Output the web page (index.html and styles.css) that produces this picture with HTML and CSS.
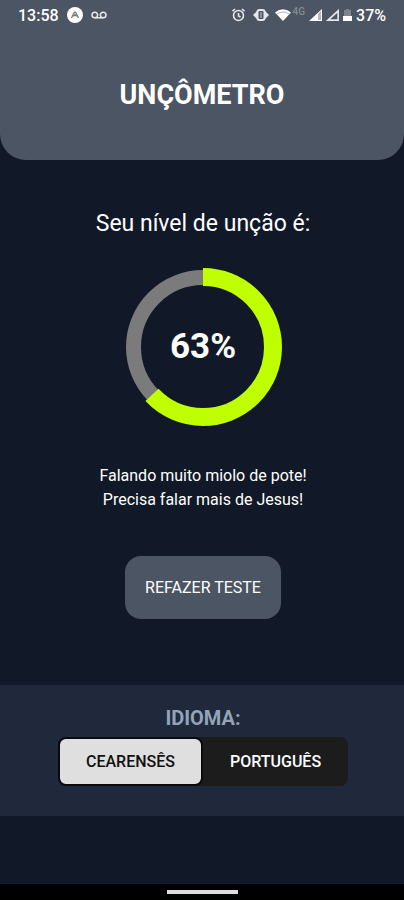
FILE: index.html
```
<!DOCTYPE html>
<html lang="pt-BR">
<head>
<meta charset="utf-8">
<meta name="viewport" content="width=device-width, initial-scale=1">
<title>Unçômetro</title>
<link rel="stylesheet" href="styles.css">
</head>
<body>
<header class="header">
  <div class="status">
    <div class="status-left">
      <span class="clock">13:58</span>
      <svg width="16" height="16" viewBox="0 0 16 16" aria-hidden="true">
        <circle cx="8" cy="8" r="8" fill="#fff"/>
        <path d="M4.5 11 7 5.8Q8 4.4 9 5.8L11.500 11M6.500 9.500 8 7.500 9.500 9.500" fill="none" stroke="#6b7480" stroke-width="1.200"/>
      </svg>
      <svg width="16" height="8" viewBox="0 0 16 8" fill="none" stroke="#e5e7eb" stroke-width="1.500" aria-hidden="true">
        <circle cx="3.800" cy="4" r="2.800"/><circle cx="12.200" cy="4" r="2.800"/><path d="M3.800 6.800h8.400"/>
      </svg>
    </div>
    <div class="status-right">
      <svg class="alarm" width="13" height="14" viewBox="0 0 13 14" fill="none" stroke="#e5e7eb" stroke-width="1.600" aria-hidden="true">
        <circle cx="6.500" cy="7.500" r="5"/><path d="M.500 3.200 3 1M12.500 3.200 10 1M6.500 5v3l2 1"/>
      </svg>
      <svg class="vibrate" width="16" height="12" viewBox="0 0 16 12" aria-hidden="true">
        <path d="M0 6 4 2v8zM16 6l-4-4v8z" fill="#e5e7eb"/><rect x="4.500" y="1" width="7" height="10" rx="2" fill="none" stroke="#e5e7eb" stroke-width="2"/><path d="M8 3v6" stroke="#9ca3af" stroke-width="1.500"/>
      </svg>
      <svg class="wifi" width="16" height="12" viewBox="0 0 16 12" aria-hidden="true">
        <path d="M0 3.500Q8-3 16 3.500L8 12z" fill="#fff"/><path d="M2 5Q8 1 14 5" fill="none" stroke="#9ca3af" stroke-width=".8"/>
      </svg>
      <span class="network">4G</span>
      <svg class="signal" width="13" height="12" viewBox="0 0 13 12" aria-hidden="true">
        <path d="M0 12 13 0v12z" fill="#fff"/><path d="M9 5v6h3V2z" fill="#b5bac2"/>
      </svg>
      <svg class="signal" width="13" height="12" viewBox="0 0 13 12" aria-hidden="true">
        <path d="M2 11.200 12.200 1.800v9.400z" fill="none" stroke="#e5e7eb" stroke-width="1.700"/>
      </svg>
      <svg class="battery" width="9" height="12" viewBox="0 0 9 12" aria-hidden="true">
        <path d="M3 0h3v1h2v6H1V1h2z" fill="#7b838f"/><path d="M0 7h9v5H0z" fill="#fff"/>
      </svg>
      <span class="charge">37%</span>
    </div>
  </div>
  <h1 class="title">UNÇÔMETRO</h1>
</header>
<main class="result">
  <h2 class="heading">Seu nível de unção é:</h2>
  <div class="gauge">
    <svg class="ring" viewBox="0 0 158 158" fill="none" aria-hidden="true">
      <circle cx="79" cy="79" r="69.500" stroke="#7b7b7b" stroke-width="15"/>
      <circle cx="79" cy="79" r="70" stroke="#bfff00" stroke-width="18" pathLength="100" stroke-dasharray="63 37" transform="rotate(-90 79 79)"/>
    </svg>
    <strong class="value">63%</strong>
  </div>
  <p class="message">Falando muito miolo de pote!<br>Precisa falar mais de Jesus!</p>
  <button class="retry" type="button">REFAZER TESTE</button>
</main>
<section class="language" aria-labelledby="language-label">
  <h2 class="language-label" id="language-label">IDIOMA:</h2>
  <div class="switch">
    <button class="option selected" type="button" aria-pressed="true">CEARENSÊS</button>
    <button class="option" type="button" aria-pressed="false">PORTUGUÊS</button>
  </div>
</section>
<footer class="navbar"><div class="handle"></div></footer>
</body>
</html>
```
FILE: styles.css
```
* {
  box-sizing: border-box;
}

body {
  margin: 0;
  min-height: 100vh;
  display: flex;
  flex-direction: column;
  background: #111827;
  color: #fff;
  font-family: Roboto, sans-serif;
}

h1,
h2,
p {
  margin: 0;
}

button {
  font: inherit;
  border: 0;
  cursor: pointer;
}

svg {
  display: block;
}

.header {
  padding-bottom: 48px;
  background: #4b5563;
  border-radius: 0 0 26px 26px;
}

.status {
  display: flex;
  justify-content: space-between;
  align-items: center;
  height: 30px;
  padding: 0 18px;
  font-size: 16px;
  font-weight: 500;
}

.status-left,
.status-right {
  display: flex;
  align-items: center;
}

.status-left {
  gap: 8px;
}

.status-right {
  gap: 4px;
}

.alarm {
  margin-right: 4px;
}

.vibrate {
  margin-right: 2px;
}

.wifi {
  margin-right: -2px;
}

.network {
  align-self: flex-start;
  color: #838b96;
  font-size: 10px;
  line-height: 12px;
}

.title {
  margin-top: 48px;
  font-size: 27px;
  line-height: 34px;
  font-weight: 700;
  text-align: center;
}

.result {
  display: flex;
  flex-direction: column;
  align-items: center;
  padding: 48px 16px 66px 18px;
}

.heading {
  font-size: 23px;
  line-height: 32px;
  font-weight: 400;
}

.gauge {
  display: grid;
  place-items: center;
  margin-top: 28px;
}

.ring,
.value {
  grid-area: 1 / 1;
}

.ring {
  width: 158px;
}

.value {
  font-size: 35px;
  line-height: 40px;
}

.message {
  margin-top: 38px;
  font-size: 16px;
  line-height: 24px;
  text-align: center;
}

.retry {
  margin-top: 44px;
  padding: 20px;
  background: #4b5563;
  color: #fff;
  border-radius: 16px;
  font-size: 16px;
  line-height: 23px;
}

.language {
  display: flex;
  flex-direction: column;
  align-items: center;
  padding: 20px 16px 30px 18px;
  background: #1f293b;
}

.language-label {
  color: #94a3b8;
  font-size: 20px;
  line-height: 26px;
  font-weight: 700;
}

.switch {
  display: grid;
  grid-template-columns: 1fr 1fr;
  margin-top: 6px;
  background: #1c1c1c;
  border-radius: 8px;
}

.option {
  padding: 12px 25px;
  background: transparent;
  color: #fff;
  border: 2px solid transparent;
  border-radius: 8px;
  font-size: 16px;
  font-weight: 500;
  line-height: 21px;
}

.selected {
  background: #dfdfdf;
  color: #111;
  border-color: #080a0e;
}

.navbar {
  display: flex;
  justify-content: center;
  align-items: center;
  height: 16px;
  margin-top: auto;
  background: #000;
}

.handle {
  width: 71px;
  height: 4px;
  background: #ddd;
}
```
